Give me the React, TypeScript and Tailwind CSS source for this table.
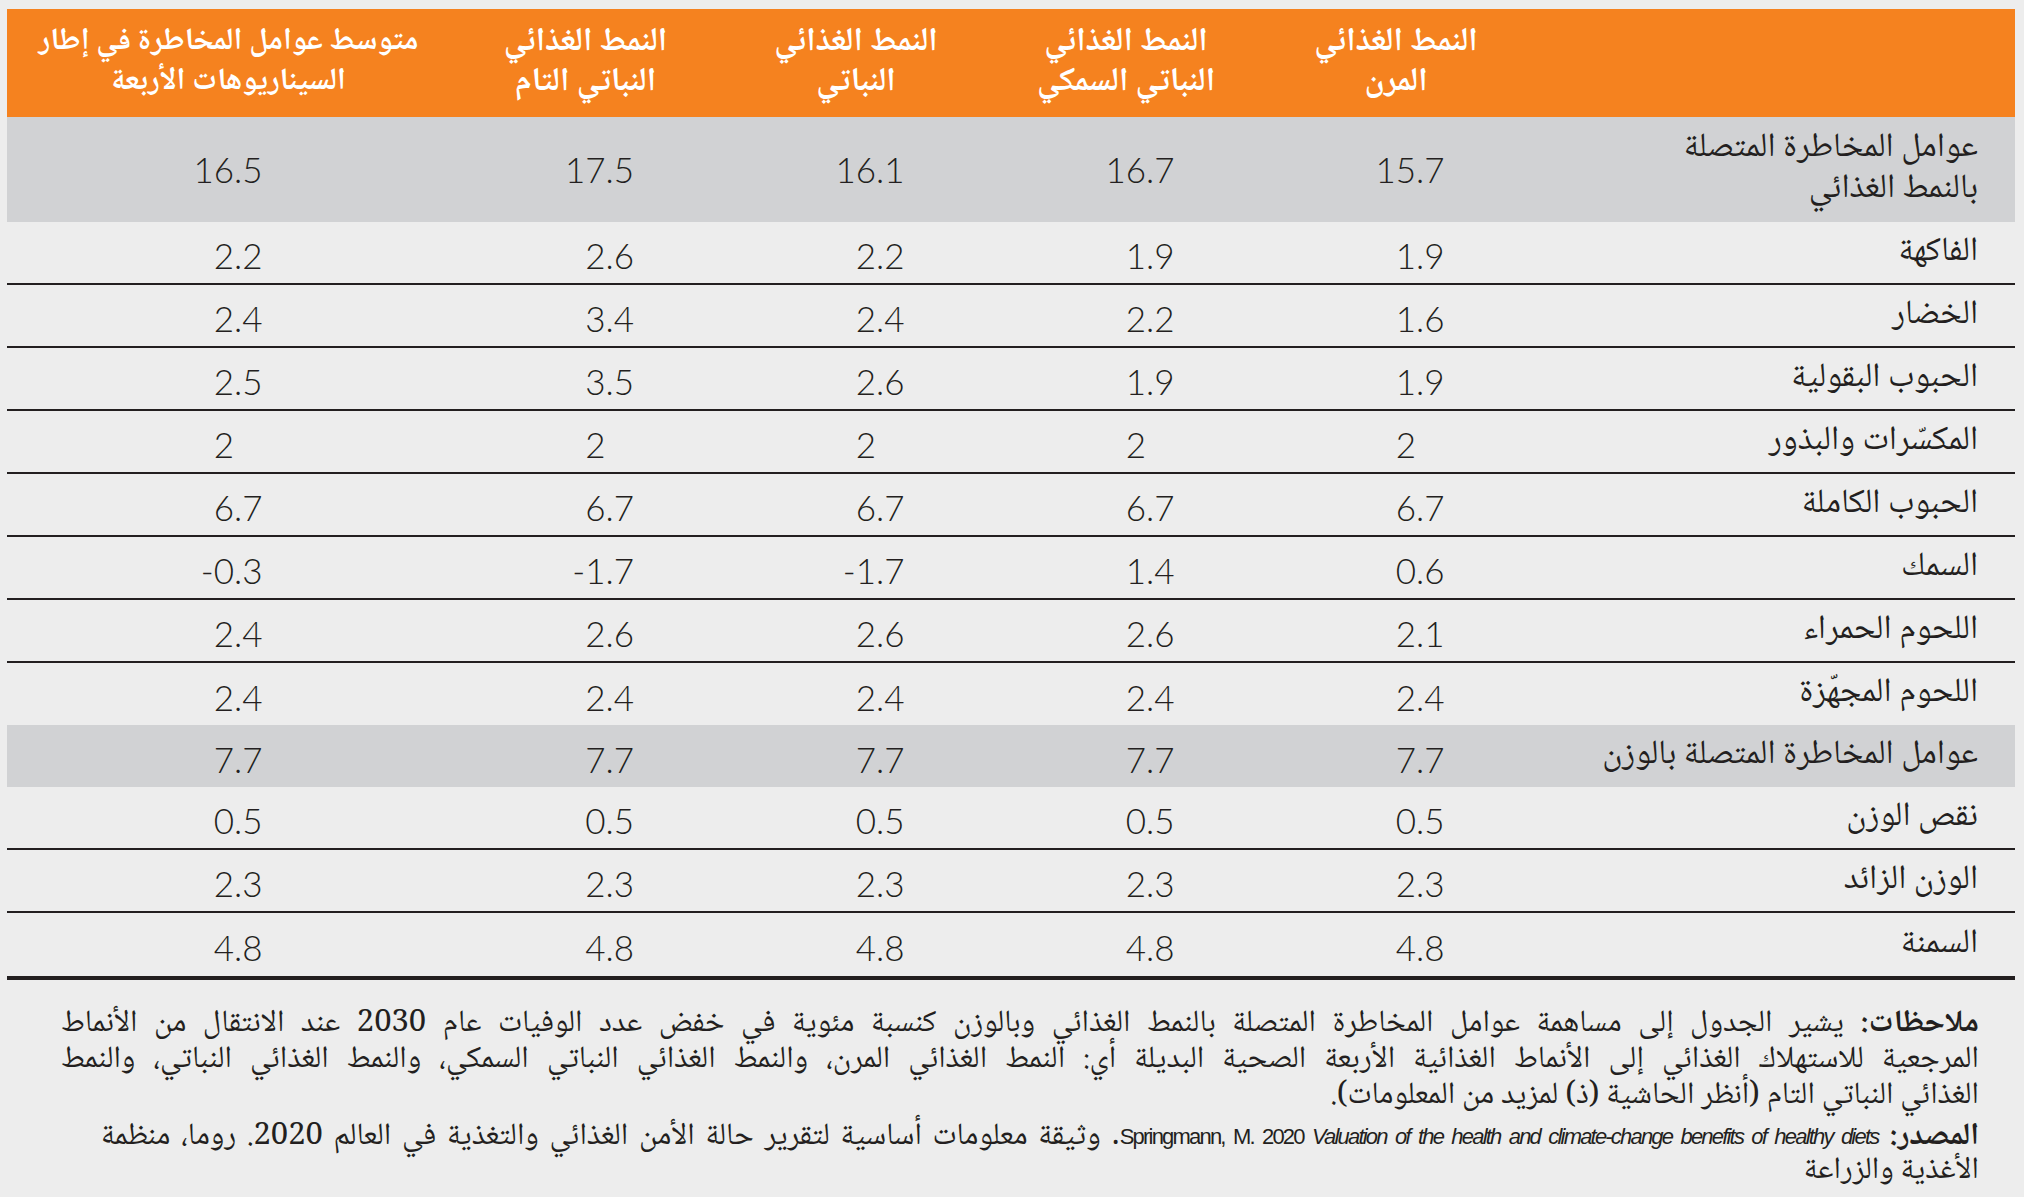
import React from "react";

const AR = "[font-family:'Noto_Naskh_Arabic','Noto_Sans_Arabic','DejaVu_Sans',sans-serif]";
const NUMF = "[font-family:Lato,'Liberation_Sans',sans-serif]";

type Row = { label: string[]; vals: string[]; gray?: boolean; border?: boolean; h: string; top?: boolean };

const rows: Row[] = [
  { label: ["عوامل المخاطرة المتصلة", "بالنمط الغذائي"], vals: ["15.7", "16.7", "16.1", "17.5", "16.5"], gray: true, h: "h-[105px]", top: true },
  { label: ["الفاكهة"], vals: ["1.9", "1.9", "2.2", "2.6", "2.2"], border: true, h: "h-[63px]" },
  { label: ["الخضار"], vals: ["1.6", "2.2", "2.4", "3.4", "2.4"], border: true, h: "h-[63px]" },
  { label: ["الحبوب البقولية"], vals: ["1.9", "1.9", "2.6", "3.5", "2.5"], border: true, h: "h-[63px]" },
  { label: ["المكسّرات والبذور"], vals: ["2", "2", "2", "2", "2"], border: true, h: "h-[63px]" },
  { label: ["الحبوب الكاملة"], vals: ["6.7", "6.7", "6.7", "6.7", "6.7"], border: true, h: "h-[63px]" },
  { label: ["السمك"], vals: ["0.6", "1.4", "-1.7", "-1.7", "-0.3"], border: true, h: "h-[63px]" },
  { label: ["اللحوم الحمراء"], vals: ["2.1", "2.6", "2.6", "2.6", "2.4"], border: true, h: "h-[63px]" },
  { label: ["اللحوم المجهّزة"], vals: ["2.4", "2.4", "2.4", "2.4", "2.4"], h: "h-[62px]" },
  { label: ["عوامل المخاطرة المتصلة بالوزن"], vals: ["7.7", "7.7", "7.7", "7.7", "7.7"], gray: true, h: "h-[62px]" },
  { label: ["نقص الوزن"], vals: ["0.5", "0.5", "0.5", "0.5", "0.5"], border: true, h: "h-[63px]" },
  { label: ["الوزن الزائد"], vals: ["2.3", "2.3", "2.3", "2.3", "2.3"], border: true, h: "h-[63px]" },
  { label: ["السمنة"], vals: ["4.8", "4.8", "4.8", "4.8", "4.8"], h: "h-[63px]" },
];

const headers: string[][] = [
  ["النمط الغذائي", "المرن"],
  ["النمط الغذائي", "النباتي السمكي"],
  ["النمط الغذائي", "النباتي"],
  ["النمط الغذائي", "النباتي التام"],
  ["متوسط عوامل المخاطرة في إطار", "السيناريوهات الأربعة"],
];

const GRID = "grid grid-cols-[484px_270px_270px_270px_271px_443px]";

function Num({ v, last, top }: { v: string; last?: boolean; top?: boolean }) {
  const i = v.indexOf(".");
  const int = i >= 0 ? v.slice(0, i) : v;
  const frac = i >= 0 ? v.slice(i) : "";
  return (
    <div className={`flex items-center justify-center ${last ? "pr-[29px]" : ""}`}>
      <div
        dir="ltr"
        className={`flex ml-[40px] ${NUMF} font-light text-[35px] leading-none text-[#231f20] ${top ? "pt-0" : "pt-[6px]"}`}
      >
        <span className="w-[80px] text-right">{int}</span>
        <span className="w-[80px] text-left">{frac}</span>
      </div>
    </div>
  );
}

export default function App() {
  return (
    <div className="w-[2024px] h-[1197px] bg-[#ededed] pt-[9px] pl-[7px] pr-[9px] overflow-hidden">
      <div dir="rtl" className="w-[2008px]">
        {/* header */}
        <div className={`${GRID} h-[108px] bg-[#f5821f]`}>
          <div />
          {headers.map((h, idx) => (
            <div
              key={idx}
              className={`flex flex-col items-center justify-center text-white font-bold leading-[40px] ${AR} ${
                idx === 4 ? "text-[31px]" : "text-[33px]"
              }`}
            >
              <div className="whitespace-nowrap">{h[0]}</div>
              <div className="whitespace-nowrap">{h[1]}</div>
            </div>
          ))}
        </div>
        {rows.map((r, ri) => (
          <div
            key={ri}
            className={`${GRID} ${r.h} ${r.gray ? "bg-[#d1d2d4]" : ""} ${r.border ? "border-b-2 border-[#231f20]" : ""}`}
          >
            <div
              className={`flex flex-col justify-center pr-[37px] text-[34px] text-[#231f20] ${AR} ${
                r.top ? "leading-[41px]" : "leading-[44px]"
              }`}
            >
              {r.label.map((l, li) => (
                <div key={li} className="whitespace-nowrap">
                  {l}
                </div>
              ))}
            </div>
            {r.vals.map((v, vi) => (
              <Num key={vi} v={v} last={vi === 4} top={r.top} />
            ))}
          </div>
        ))}
        <div className="h-[4px] bg-[#231f20]" />
        {/* notes */}
        <div className={`pt-[27px] pr-[36px] pl-[54px] text-[#231f20] text-[31px] leading-[36px] ${AR}`}>
          <div className="whitespace-nowrap [text-align-last:justify]">
            <span className="font-bold">ملاحظات:</span> يشير الجدول إلى مساهمة عوامل المخاطرة المتصلة بالنمط الغذائي وبالوزن كنسبة مئوية في خفض عدد الوفيات عام 2030 عند الانتقال من الأنماط
          </div>
          <div className="whitespace-nowrap [text-align-last:justify]">
            المرجعية للاستهلاك الغذائي إلى الأنماط الغذائية الأربعة الصحية البديلة أي: النمط الغذائي المرن، والنمط الغذائي النباتي السمكي، والنمط الغذائي النباتي، والنمط
          </div>
          <div className="whitespace-nowrap">الغذائي النباتي التام (أنظر الحاشية (ذ) لمزيد من المعلومات).</div>
          <div className="whitespace-nowrap mt-[4px] pl-[40px] [text-align-last:justify]">
            <span className="font-bold">المصدر:</span>{" "}
            <span dir="ltr" className="[font-family:'Liberation_Sans',sans-serif] text-[22px] tracking-[-1.8px]">
              Springmann, M. 2020 <span className="italic">Valuation of the health and climate-change benefits of healthy diets</span>
            </span>
            . وثيقة معلومات أساسية لتقرير حالة الأمن الغذائي والتغذية في العالم 2020. روما، منظمة
          </div>
          <div className="whitespace-nowrap leading-[32px]">الأغذية والزراعة</div>
        </div>
      </div>
    </div>
  );
}
